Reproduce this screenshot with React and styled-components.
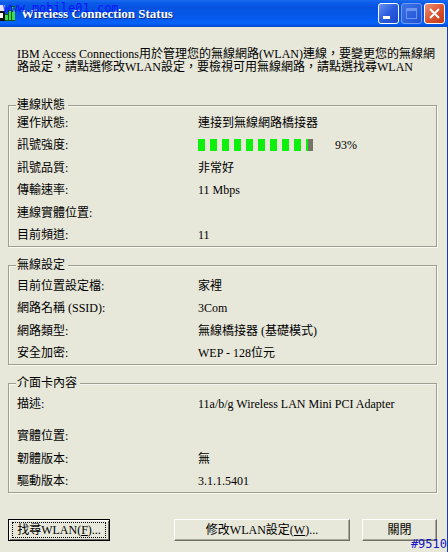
import React from 'react';
import styled, { createGlobalStyle } from 'styled-components';

const GlobalStyle = createGlobalStyle`
  * {
    box-sizing: border-box;
  }

  body {
    margin: 0;
    background: #e7e7da;
    color: #000;
    font-family: 'Liberation Serif', 'Noto Sans CJK TC', serif;
    font-size: 12px;
  }
`;

const Window = styled.div`
  position: relative;
  display: flex;
  flex-direction: column;
  min-height: 100vh;
  background: #e7e7da;
`;

const TitleBar = styled.header`
  display: flex;
  align-items: center;
  gap: 2px;
  height: 27px;
  padding-right: 3px;
  background: linear-gradient(#1c6cf0 0, #0a5bea 3px, #0653e0 8px, #0559ec 18px, #0563fb 23px, #0448c8 27px);
`;

const TitleIcon = styled.svg`
  flex: none;
  margin-right: 3px;
`;

const Title = styled.h1`
  flex: 1;
  margin: 0;
  color: #fff;
  font-size: 13px;
  line-height: 16px;
  text-shadow: 1px 1px 0 #0a2a80;
  white-space: nowrap;
`;

const captionColors = {
  normal: 'linear-gradient(135deg, #6b93f2, #2a5be0 50%, #1c49c8)',
  disabled: 'linear-gradient(135deg, #3f74e6, #1c50d4)',
  close: 'linear-gradient(135deg, #ec9478, #dc5532 50%, #c03a18)',
};

const CaptionButton = styled.button`
  display: flex;
  align-items: center;
  justify-content: center;
  width: 21px;
  height: 21px;
  padding: 0;
  border: 1px solid ${props => props.$kind === 'disabled' ? '#6f9af0' : '#fff'};
  border-radius: 3px;
  background: ${props => captionColors[props.$kind]};
`;

const Body = styled.main`
  flex: 1;
  padding: 21px 10px 11px 8px;
  border-right: 1px solid #1b3ca8;
`;

const Intro = styled.p`
  margin: 0 0 25px;
  padding-left: 9px;
  line-height: 13px;
  white-space: nowrap;
`;

const Group = styled.fieldset`
  min-width: 0;
  margin: 0 0 12px;
  padding: 0 8px;
  border: 1px solid #9f9f90;
  box-shadow: 1px 1px 0 #fafaf2, inset 1px 1px 0 #f6f6ee;
`;

const Legend = styled.legend`
  padding: 0 3px 0 1px;
  margin-left: -1px;
  background: #e7e7da;
  line-height: 12px;
`;

const Rows = styled.dl`
  margin: 0;
  padding-top: ${props => props.$roomy ? '3px' : 0};
`;

const Row = styled.div`
  display: grid;
  grid-template-columns: 181px 1fr;
  align-items: center;
  height: 23px;
  margin-bottom: ${props => props.$spaced ? '10px' : 0};
  line-height: 16px;
  white-space: nowrap;

  &:nth-child(even) {
    height: 22px;
  }
`;

const Term = styled.dt``;

const Value = styled.dd`
  display: flex;
  align-items: center;
  margin: 0;
`;

const Meter = styled.div`
  display: flex;
  gap: 5px;
  margin-right: 22px;
`;

const Block = styled.span`
  width: 7px;
  height: 12px;
  background: #747468;
`;

const BlockFill = styled.span`
  display: block;
  height: 100%;
  background: #0cf00c;
`;

const Buttons = styled.footer`
  display: flex;
  align-items: center;
  padding-top: 14px;
`;

const Button = styled.button`
  width: ${props => props.$width}px;
  height: 22px;
  padding: 0;
  border: 1px solid;
  border-color: ${props => props.$isDefault ? '#000' : '#fff #6f6f62 #6f6f62 #fff'};
  background: #e7e7da;
  box-shadow: ${props => props.$isDefault
    ? 'inset 1px 1px 0 #fff, inset -1px -1px 0 #6f6f62'
    : 'inset -1px -1px 0 #a9a99a'};
  color: #000;
  font: inherit;
  line-height: 14px;
  white-space: nowrap;

  &:first-child {
    margin-right: auto;
  }

  &:last-child {
    margin-left: 12px;
  }
`;

const Focus = styled.span`
  display: block;
  margin: 0 3px;
  border: 1px dotted #000;
`;

const Watermark = styled.span`
  position: absolute;
  color: ${props => props.$corner ? '#1414c8' : '#0c14f8'};
  font-family: 'DejaVu Sans Mono', monospace;
  font-size: 12px;
  line-height: 14px;
  ${props => props.$corner ? 'right: 1px; bottom: 1px;' : 'left: 3px; top: 1px;'}
`;

const connection = [
  { label: '運作狀態:', value: '連接到無線網路橋接器' },
  { label: '訊號強度:', percent: 93 },
  { label: '訊號品質:', value: '非常好' },
  { label: '傳輸速率:', value: '11 Mbps' },
  { label: '連線實體位置:', value: '' },
  { label: '目前頻道:', value: '11' },
];

const wireless = [
  { label: '目前位置設定檔:', value: '家裡' },
  { label: '網路名稱 (SSID):', value: '3Com' },
  { label: '網路類型:', value: '無線橋接器 (基礎模式)' },
  { label: '安全加密:', value: 'WEP - 128位元' },
];

const adapter = [
  { label: '描述:', value: '11a/b/g Wireless LAN Mini PCI Adapter', spaced: true },
  { label: '實體位置:', value: '' },
  { label: '韌體版本:', value: '無' },
  { label: '驅動版本:', value: '3.1.1.5401' },
];

function SignalMeter({ percent }) {
  return (
    <>
      <Meter role="meter" aria-label="訊號強度" aria-valuenow={percent} aria-valuemin={0} aria-valuemax={100}>
        {Array.from({ length: 10 }, (_, i) => {
          const fill = Math.max(0, Math.min(10, percent - i * 10));
          return (
            <Block key={i}>
              <BlockFill style={{ width: `${fill * 10}%` }} />
            </Block>
          );
        })}
      </Meter>
      {percent}%
    </>
  );
}

function StatusGroup({ title, rows, roomy }) {
  return (
    <Group>
      <Legend>{title}</Legend>
      <Rows $roomy={roomy}>
        {rows.map(row => (
          <Row key={row.label} $spaced={row.spaced}>
            <Term>{row.label}</Term>
            <Value>{row.percent ? <SignalMeter percent={row.percent} /> : row.value}</Value>
          </Row>
        ))}
      </Rows>
    </Group>
  );
}

function App() {
  return (
    <Window>
      <GlobalStyle />
      <TitleBar>
        <TitleIcon width="16" height="17" viewBox="0 0 16 17" shapeRendering="crispEdges">
          <path d="M0 0h5v6H0z" fill="#dfe6ff" />
          <path d="M0 6h5v10H0z" fill="#111" />
          <path d="M0 8h3v5H0z" fill="#fff" />
          <path d="M5 9h4v7H5zM8 5h4v11H8zM11 1h4v15h-4z" fill="#0b5a20" />
          <path d="M5 10h3v5H5zM9 6h2v9H9zM12 2h3v13h-3z" fill="#3fdc48" />
        </TitleIcon>
        <Title>Wireless Connection Status</Title>
        <CaptionButton $kind="normal" aria-label="Minimize">
          <svg width="13" height="13" shapeRendering="crispEdges">
            <path d="M1 9h7v3H1z" fill="#fff" />
          </svg>
        </CaptionButton>
        <CaptionButton $kind="disabled" aria-label="Maximize" disabled>
          <svg width="13" height="13" shapeRendering="crispEdges">
            <path d="M1 1h11v11H1zM2 4v7h9V4z" fill="#6c95ee" fillRule="evenodd" />
          </svg>
        </CaptionButton>
        <CaptionButton $kind="close" aria-label="Close">
          <svg width="13" height="13">
            <path d="M2 2l9 9M11 2l-9 9" stroke="#fff" strokeWidth="2" />
          </svg>
        </CaptionButton>
      </TitleBar>
      <Body>
        <Intro>
          IBM Access Connections用於管理您的無線網路(WLAN)連線，要變更您的無線網
          <br />
          路設定，請點選修改WLAN設定，要檢視可用無線網路，請點選找尋WLAN
        </Intro>
        <StatusGroup title="連線狀態" rows={connection} />
        <StatusGroup title="無線設定" rows={wireless} roomy />
        <StatusGroup title="介面卡內容" rows={adapter} roomy />
        <Buttons>
          <Button $width={102} $isDefault>
            <Focus>找尋WLAN(<u>F</u>)...</Focus>
          </Button>
          <Button $width={176}>修改WLAN設定(<u>W</u>)...</Button>
          <Button $width={75}>關閉</Button>
        </Buttons>
      </Body>
      <Watermark>www.mobile01.com</Watermark>
      <Watermark $corner>#9510</Watermark>
    </Window>
  );
}

export default App;
